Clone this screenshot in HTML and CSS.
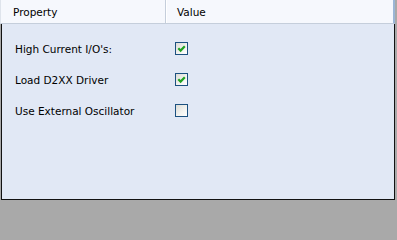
FILE: index.html
```html
<!DOCTYPE html>
<html>
<head>
<meta charset="utf-8">
<link rel="stylesheet" href="styles.css">
</head>
<body>
<div class="grid">
  <div class="header">
    <div class="hcell prop">Property</div>
    <div class="hcell val">Value</div>
  </div>
  <div class="panel">
    <div class="row">
      <span class="label">High Current I/O's:</span>
      <span class="cb checked"><svg viewBox="0 0 13 13" width="13" height="13"><path d="M3.3 6.3 L5.6 8.6 L9.8 4.2" fill="none" stroke="#22a322" stroke-width="2.2"/></svg></span>
    </div>
    <div class="row">
      <span class="label">Load D2XX Driver</span>
      <span class="cb checked"><svg viewBox="0 0 13 13" width="13" height="13"><path d="M3.3 6.3 L5.6 8.6 L9.8 4.2" fill="none" stroke="#22a322" stroke-width="2.2"/></svg></span>
    </div>
    <div class="row">
      <span class="label">Use External Oscillator</span>
      <span class="cb"></span>
    </div>
  </div>
</div>
</body>
</html>
```
FILE: styles.css
```css
html, body {
  margin: 0;
  padding: 0;
  background: #a9a9a9;
}
body {
  width: 397px;
  height: 202px;
  font-family: "DejaVu Sans", Tahoma, sans-serif;
  font-size: 10.5px;
  color: #000;
}
.grid {
  width: 397px;
  height: 202px;
  display: flex;
  flex-direction: column;
  box-sizing: border-box;
}
.header {
  height: 24px;
  flex: none;
  display: flex;
  background: #f6f8fd;
  border-bottom: 1px solid #c5cedb;
  box-sizing: border-box;
  border-left: 1px solid #dfe4ec;
  border-right: 2px solid #9cb6d6;
  margin-right: 2px;
}
.hcell {
  display: flex;
  align-items: center;
  padding-left: 12px;
  box-sizing: border-box;
}
.prop {
  width: 165px;
  border-right: 1px solid #c5cedb;
}
.val {
  flex: 1;
  border-left: 1px solid #fff;
  padding-left: 10px;
}
.panel {
  flex: 1;
  background: #e1e8f5;
  border: 1px solid #111;
  border-top: none;
  margin: 0 2px 2px 1px;
  padding-top: 9px;
  display: flex;
  flex-direction: column;
}
.row {
  height: 31px;
  display: flex;
  align-items: center;
}
.label {
  width: 160px;
  padding-left: 13px;
  box-sizing: border-box;
}
.cb {
  width: 13px;
  height: 13px;
  margin-left: 13px;
  box-sizing: border-box;
  border: 1px solid #1c5180;
  background: linear-gradient(135deg, #dcdcd6 0%, #f4f4f1 60%, #ffffff 100%);
  display: block;
  position: relative;
}
.cb svg {
  position: absolute;
  left: -1px;
  top: -1px;
}
```
